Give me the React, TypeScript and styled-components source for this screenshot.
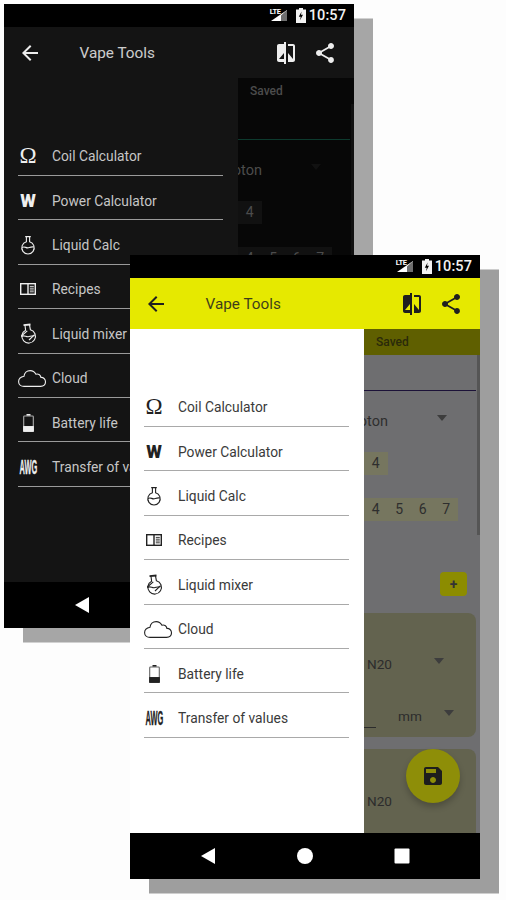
import React from "react";
import styled, { createGlobalStyle, ThemeProvider } from "styled-components";

const Global = createGlobalStyle`
  html, body { margin: 0; padding: 0; background: #fdfdfd; }
  body { font-family: Roboto, "Liberation Sans", sans-serif; }
`;

const light = {
  appBar: "#e6e900", appInk: "#1f1f1f", drawer: "#ffffff", ink: "#3a3a3a", iconInk: "#222222", rule: "#a9a9a9",
  screen: "#6e6e70", strip: "#5f5f00", stripInk: "#2a2a0a", line: "#1c1238", dimInk: "#2e2e2e", chip: "#76765f",
  caret: "#3d3d3d", card: "#63634f", field: "#2c2c2c", plus: "#8c8c00", plusInk: "#333", bar: "#555", fab: "#8e8e08",
  shadow: "#9e9e9e",
};
const dark = {
  appBar: "#141414", appInk: "#ededed", drawer: "#141414", ink: "#c6c6c6", iconInk: "#eeeeee", rule: "#9a9a9a",
  screen: "#070707", strip: "#070707", stripInk: "#4c4c4c", line: "#0d3a2e", dimInk: "#4c4c4c", chip: "#111111",
  caret: "#111", card: "#111", field: "#4c4c4c", plus: "#222", plusInk: "#444", bar: "#111", fab: "#222",
  shadow: "#a6a6a6",
};

const Canvas = styled.div`
  position: relative;
  width: 506px;
  height: 900px;
  overflow: hidden;
`;

const Device = styled.section<{ $x: number; $y: number }>`
  position: absolute;
  left: ${(p) => p.$x}px;
  top: ${(p) => p.$y}px;
  width: 350px;
  height: 624px;
  display: flex;
  flex-direction: column;
  background: #000;
  box-shadow: 19px 14.5px 0 ${(p) => p.theme.shadow};
`;

const StatusBar = styled.header`
  height: 23px;
  flex: none;
  background: #000;
  color: #f2f2f2;
  display: flex;
  align-items: center;
  justify-content: flex-end;
  padding-right: 8px;
`;

const SignalWrap = styled.span`
  position: relative;
  width: 19px;
  height: 15px;
  margin-right: 8px;
`;

const Lte = styled.span`
  position: absolute;
  left: 1px;
  top: 0;
  font-size: 7.5px;
  line-height: 8px;
  font-weight: 700;
  letter-spacing: -0.4px;
  color: #fff;
`;

const Clock = styled.span`
  font-size: 14.5px;
  font-weight: 500;
  margin-left: 3px;
  letter-spacing: 0.1px;
`;

const AppBar = styled.div`
  height: 51px;
  flex: none;
  background: ${(p) => p.theme.appBar};
  color: ${(p) => p.theme.appInk};
  display: flex;
  align-items: center;
  padding-left: 14px;
  position: relative;
  z-index: 2;
`;

const Title = styled.h1`
  margin: 1px 0 0 37.5px;
  font-size: 15.3px;
  font-weight: 400;
  flex: 1;
  opacity: 0.85;
`;

const BarIcon = styled.svg`
  width: 24px;
  height: 24px;
  fill: currentColor;
  flex: none;
`;

const BarActions = styled.div`
  display: flex;
  gap: 15px;
  padding-right: 17px;
`;

const Body = styled.div`
  position: relative;
  flex: 1;
  min-height: 0;
  overflow: hidden;
  background: ${(p) => p.theme.screen};
`;

const Strip = styled.div`
  height: 26px;
  background: ${(p) => p.theme.strip};
  color: ${(p) => p.theme.stripInk};
  font-size: 12px;
  font-weight: 500;
  line-height: 26px;
  padding-left: 246px;
`;

const NameField = styled.div`
  height: 36px;
  margin-right: 4px;
  border-bottom: 1px solid ${(p) => p.theme.line};
  box-sizing: border-box;
`;

const SelectRow = styled.div`
  display: flex;
  align-items: center;
  height: 24px;
  margin-top: 18px;
  padding-left: 200px;
  color: ${(p) => p.theme.dimInk};
  font-size: 14.5px;
`;

const SelectText = styled.span`
  width: 58px;
  text-align: right;
  white-space: nowrap;
`;

const Caret = styled.i<{ $gap?: number }>`
  width: 0;
  height: 0;
  margin-left: ${(p) => p.$gap ?? 0}px;
  margin-top: -7px;
  border-left: 5.5px solid transparent;
  border-right: 5.5px solid transparent;
  border-top: 6px solid ${(p) => p.theme.caret};
`;

const ChipLine = styled.div<{ $top: number }>`
  display: flex;
  padding: ${(p) => p.$top}px 0 0 163.5px;
`;

const Chips = styled.div`
  display: flex;
  background: ${(p) => p.theme.chip};
  color: ${(p) => p.theme.dimInk};
  font-size: 14px;
  line-height: 23px;
`;

const Chip = styled.span`
  width: 23.5px;
  text-align: center;
`;

const PlusRow = styled.div`
  display: flex;
  justify-content: flex-end;
  padding-right: 13px;
  margin-top: 51px;
`;

const PlusButton = styled.button`
  width: 27px;
  height: 24px;
  padding: 0;
  border: 0;
  border-radius: 4px;
  background: ${(p) => p.theme.plus};
  color: ${(p) => p.theme.plusInk};
  font: 700 14px Roboto, sans-serif;
`;

const Card = styled.div<{ $top: number; $pad: number; $h: number }>`
  margin: ${(p) => p.$top}px 4px 0 8px;
  height: ${(p) => p.$h}px;
  padding-top: ${(p) => p.$pad}px;
  box-sizing: border-box;
  border-radius: 8px;
  background: ${(p) => p.theme.card};
  color: ${(p) => p.theme.field};
  font-size: 13.6px;
`;

const CardRow = styled.div`
  display: flex;
  align-items: center;
  height: 24px;
  padding-left: 229px;
`;

const UnitRow = styled.div`
  display: flex;
  align-items: center;
  height: 24px;
  margin-top: 28px;
  padding-left: 112px;
`;

const FieldLine = styled.span`
  width: 126px;
  height: 1px;
  margin-right: 22px;
  align-self: flex-end;
  background: ${(p) => p.theme.field};
`;

const ScrollBar = styled.div`
  position: absolute;
  right: 0;
  top: 26px;
  width: 3px;
  height: 180px;
  background: ${(p) => p.theme.bar};
`;

const Fab = styled.button`
  position: absolute;
  left: 276px;
  top: 420px;
  width: 54px;
  height: 54px;
  padding: 0;
  border: 0;
  border-radius: 50%;
  background: ${(p) => p.theme.fab};
  color: #1d1d1d;
  display: flex;
  align-items: center;
  justify-content: center;
  box-shadow: 0 4px 6px rgba(0, 0, 0, 0.22);
`;

const Drawer = styled.nav`
  position: absolute;
  left: 0;
  top: 0;
  bottom: 0;
  width: 234px;
  padding: 53.6px 15px 0 14px;
  box-sizing: border-box;
  background: ${(p) => p.theme.drawer};
`;

const MenuRow = styled.div`
  height: 44.4px;
  padding-top: 6px;
  box-sizing: border-box;
  border-bottom: 1px solid ${(p) => p.theme.rule};
  display: flex;
  align-items: center;
  color: ${(p) => p.theme.ink};
  font-size: 13.8px;
  white-space: nowrap;
`;

const IconCell = styled.span<{ $start?: boolean }>`
  width: 20px;
  margin-right: 14px;
  flex: none;
  display: flex;
  justify-content: ${(p) => (p.$start ? "flex-start" : "center")};
  align-items: center;
  color: ${(p) => p.theme.iconInk};
`;

const OmegaGlyph = styled.span`
  font: 400 23px/24px "Liberation Serif", serif;
`;

const WattGlyph = styled.span`
  font: 900 18px/24px Roboto, sans-serif;
`;

const AwgGlyph = styled.span`
  font: 700 19.5px/24px "Liberation Sans", sans-serif;
  display: inline-block;
  transform: scaleX(0.38);
  -webkit-text-stroke: 0.3px currentColor;
`;

const LineIcon = styled.svg`
  fill: none;
  stroke: currentColor;
  stroke-width: 1.1;
  flex: none;
  overflow: visible;
`;

const NavBar = styled.footer`
  height: 46px;
  flex: none;
  background: #000;
  display: flex;
  align-items: center;
  justify-content: center;
  gap: 73px;
`;

const NavIcon = styled.svg`
  width: 24px;
  height: 24px;
  fill: #fff;
`;

const Flask = () => (
  <LineIcon width="14" height="18" viewBox="0 0 14 18">
    <path d="M4.2 .6h5.6M5.4 .6v5.2a6.2 6.2 0 1 0 3.2 0V.6" />
    <path d="M1 11.500c2.500-1.800 4 .8 6 .3s3.500-1.300 6-.8" />
  </LineIcon>
);

const Mixer = () => (
  <LineIcon width="16" height="19" viewBox="0 0 16 19">
    <path d="M3.500 1.200l7-.7" strokeWidth="1.800" />
    <path d="M5 1.200l.6 5a6.800 6.800 0 1 0 4.800-.5L9.500 .9" />
    <path d="M1.300 12l6-5.200M9 16l5.600-5.400" />
    <path d="M1.200 12.500c3-2 4.600.6 7 .3 2-.3 4-1.600 6.300-1" />
  </LineIcon>
);

const Book = () => (
  <LineIcon width="16" height="12" viewBox="0 0 16 12">
    <rect x=".7" y=".7" width="14.600" height="10.600" strokeWidth="1.400" />
    <path d="M8 .7v10.600" strokeWidth="1.400" />
    <path d="M9.800 3.400h4M9.800 5.200h4M9.800 7h4M9.800 8.800h4" strokeWidth=".9" />
  </LineIcon>
);

const Cloud = () => (
  <LineIcon width="28" height="17" viewBox="0 0 28 17">
    <path d="M6 16.400h16.500c3 0 5-2 5-4.600 0-2.700-2.200-4.600-4.600-4.400-.5-2.600-2.700-4-5-3.200C16.600 1.800 14.500.6 12.200.6 8.800.6 6.300 3 6 6.300 2.900 6.900.6 9 .6 11.700c0 2.700 2.400 4.700 5.400 4.700z" />
  </LineIcon>
);

const Battery = () => (
  <LineIcon width="11" height="18" viewBox="0 0 11 18">
    <path d="M3.500.8h4" strokeWidth="1.600" />
    <rect x=".7" y="2" width="9.600" height="15.300" rx=".8" strokeOpacity=".7" />
    <rect x=".7" y="12.600" width="9.600" height="4.700" fill="currentColor" />
  </LineIcon>
);

const Signal = () => (
  <svg width="19" height="15" viewBox="0 0 19 15">
    <path d="M18 2v11H2z" fill="#fff" />
    <path d="M18 2v11h-6V7.500z" fill="#6f6f6f" />
  </svg>
);

const ChargingBattery = () => (
  <svg width="10" height="15" viewBox="0 0 10 15">
    <path d="M3 0h4v1.500h3V15H0V1.500h3z" fill="#f2f2f2" />
    <path d="M5.600 3.500L2.800 8.800h1.900L4 12.300l3-5.500H5z" fill="#000" />
  </svg>
);

const menu = [
  { label: "Coil Calculator", icon: <OmegaGlyph>Ω</OmegaGlyph> },
  { label: "Power Calculator", icon: <WattGlyph>W</WattGlyph> },
  { label: "Liquid Calc", icon: <Flask /> },
  { label: "Recipes", icon: <Book /> },
  { label: "Liquid mixer", icon: <Mixer /> },
  { label: "Cloud", icon: <Cloud />, start: true },
  { label: "Battery life", icon: <Battery /> },
  { label: "Transfer of values", icon: <AwgGlyph>AWG</AwgGlyph> },
];

const Phone = ({ x, y, theme }: { x: number; y: number; theme: typeof light }) => (
  <ThemeProvider theme={theme}>
    <Device $x={x} $y={y}>
      <StatusBar>
        <SignalWrap>
          <Signal />
          <Lte>LTE</Lte>
        </SignalWrap>
        <ChargingBattery />
        <Clock>10:57</Clock>
      </StatusBar>
      <AppBar>
        <BarIcon viewBox="0 0 24 24">
          <path d="M20 11H7.830l5.590-5.590L12 4l-8 8 8 8 1.410-1.410L7.830 13H20v-2z" />
        </BarIcon>
        <Title>Vape Tools</Title>
        <BarActions>
          <BarIcon viewBox="0 0 24 24">
            <path d="M10 3H5c-1.100 0-2 .9-2 2v14c0 1.100.9 2 2 2h5v2h2V1h-2v2zm0 15H5l5-6v6zm9-15h-5v2h5v13l-5-6v9h5c1.100 0 2-.9 2-2V5c0-1.100-.9-2-2-2z" />
          </BarIcon>
          <BarIcon viewBox="0 0 24 24">
            <path d="M18 16.080c-.76 0-1.440.3-1.960.77L8.910 12.700c.05-.23.09-.46.09-.7s-.04-.47-.09-.7l7.050-4.110c.54.5 1.250.81 2.040.81 1.660 0 3-1.340 3-3s-1.340-3-3-3-3 1.340-3 3c0 .24.04.47.09.7L8.040 9.810C7.500 9.310 6.790 9 6 9c-1.660 0-3 1.340-3 3s1.340 3 3 3c.79 0 1.500-.31 2.040-.81l7.120 4.160c-.05.21-.08.43-.08.65 0 1.610 1.310 2.920 2.920 2.920 1.610 0 2.920-1.310 2.920-2.920s-1.310-2.920-2.920-2.920z" />
          </BarIcon>
        </BarActions>
      </AppBar>
      <Body>
        <Strip>Saved</Strip>
        <NameField />
        <SelectRow>
          <SelectText>Proton</SelectText>
          <Caret $gap={49} />
        </SelectRow>
        <ChipLine $top={19}>
          <Chips>
            <Chip>1</Chip><Chip>2</Chip><Chip>3</Chip><Chip>4</Chip>
          </Chips>
        </ChipLine>
        <ChipLine $top={23}>
          <Chips>
            <Chip>1</Chip><Chip>2</Chip><Chip>3</Chip><Chip>4</Chip><Chip>5</Chip><Chip>6</Chip><Chip>7</Chip>
          </Chips>
        </ChipLine>
        <PlusRow>
          <PlusButton>+</PlusButton>
        </PlusRow>
        <Card $top={17} $pad={39} $h={124}>
          <CardRow>
            <span>N20</span>
            <Caret $gap={42} />
          </CardRow>
          <UnitRow>
            <FieldLine />
            <span>mm</span>
            <Caret $gap={22} />
          </UnitRow>
        </Card>
        <Card $top={12} $pad={40} $h={140}>
          <CardRow>
            <span>N20</span>
          </CardRow>
        </Card>
        <ScrollBar />
        <Fab>
          <BarIcon viewBox="0 0 24 24">
            <path d="M17 3H5c-1.110 0-2 .9-2 2v14c0 1.100.89 2 2 2h14c1.100 0 2-.9 2-2V7l-4-4zm-5 16c-1.660 0-3-1.340-3-3s1.340-3 3-3 3 1.340 3 3-1.340 3-3 3zm3-10H5V5h10v4z" />
          </BarIcon>
        </Fab>
        <Drawer>
          {menu.map((m) => (
            <MenuRow key={m.label}>
              <IconCell $start={m.start}>{m.icon}</IconCell>
              {m.label}
            </MenuRow>
          ))}
        </Drawer>
      </Body>
      <NavBar>
        <NavIcon viewBox="0 0 24 24"><path d="M19 4v16L5 12z" /></NavIcon>
        <NavIcon viewBox="0 0 24 24"><circle cx="12" cy="12" r="8" /></NavIcon>
        <NavIcon viewBox="0 0 24 24"><rect x="4.500" y="4.500" width="15" height="15" rx="1" /></NavIcon>
      </NavBar>
    </Device>
  </ThemeProvider>
);

export default function App() {
  return (
    <Canvas>
      <Global />
      <Phone x={4} y={4} theme={dark} />
      <Phone x={130} y={255} theme={light} />
    </Canvas>
  );
}
